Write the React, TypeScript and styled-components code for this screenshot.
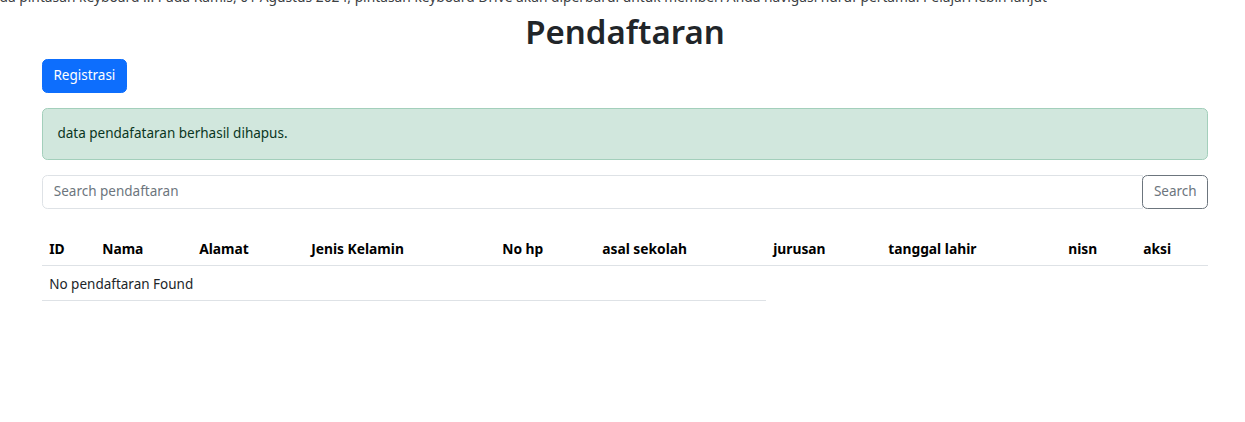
import styled, { createGlobalStyle } from "styled-components";

const GlobalStyle = createGlobalStyle`
  html, body {
    margin: 0;
    padding: 0;
    background: #fff;
  }
  body {
    font-family: "Noto Sans", "Open Sans", sans-serif;
    font-size: 13.5px;
    line-height: 21.6px;
    color: #212529;
    overflow: hidden;
  }
`;

const Notice = styled.div`
  display: flex;
  justify-content: flex-end;
  width: 1047px;
  margin-top: -14px;
  white-space: nowrap;
  overflow: hidden;
  font-size: 13.8px;
  line-height: 21.6px;
  color: #3c4043;
`;

const Container = styled.main`
  width: 1166px;
  margin-left: 42px;
`;

const Title = styled.h1`
  margin: 2px 0 6px;
  text-align: center;
  font-size: 33px;
  font-weight: 600;
  line-height: 43px;
  color: #212529;
`;

const Toolbar = styled.div`
  margin-bottom: 15px;
`;

const Button = styled.button<{ $variant?: "primary" | "outline" }>`
  font-family: inherit;
  font-size: 13.5px;
  line-height: 21.6px;
  padding: 5.2px 10.4px;
  border-radius: 5.4px;
  cursor: pointer;
  border: 1px solid ${(p) => (p.$variant === "outline" ? "#6c757d" : "#0d6efd")};
  background: ${(p) => (p.$variant === "outline" ? "transparent" : "#0d6efd")};
  color: ${(p) => (p.$variant === "outline" ? "#6c757d" : "#fff")};
`;

const Alert = styled.div`
  padding: 14.4px;
  margin-bottom: 15px;
  border: 1px solid #a3cfbb;
  border-radius: 5.4px;
  background: #d1e7dd;
  color: #0a3622;
`;

const SearchGroup = styled.form`
  display: flex;
  margin-bottom: 20px;

  ${Button} {
    border-top-left-radius: 5.4px;
    border-bottom-left-radius: 5.4px;
    margin-left: -1px;
  }
`;

const SearchInput = styled.input`
  flex: 1;
  font-family: inherit;
  font-size: 13.5px;
  line-height: 21.6px;
  padding: 5px 10.8px;
  border: 1px solid #dee2e6;
  border-radius: 5.4px 0 0 5.4px;
  color: #212529;
  outline: none;

  &::placeholder {
    color: #6c757d;
  }
`;

const Table = styled.table`
  width: 100%;
  table-layout: fixed;
  border-collapse: collapse;
`;

const Th = styled.th`
  text-align: left;
  vertical-align: bottom;
  padding: 9px 7.2px 5px;
  font-size: 13.8px;
  font-weight: 700;
  color: #000;
  border-bottom: 1px solid #dee2e6;
  white-space: nowrap;
`;

const Td = styled.td`
  padding: 8px 7.2px 5px;
  color: #212529;
  border-bottom: 1px solid #dee2e6;
`;

const columns: [string, number][] = [
  ["ID", 53],
  ["Nama", 97],
  ["Alamat", 112],
  ["Jenis Kelamin", 191],
  ["No hp", 100],
  ["asal sekolah", 171],
  ["jurusan", 115],
  ["tanggal lahir", 180],
  ["nisn", 75],
  ["aksi", 72],
];

export default function App() {
  return (
    <>
      <GlobalStyle />
      <Notice>
        Pembaruan pada pintasan keyboard ... Pada Kamis, 01 Agustus 2024, pintasan keyboard Drive akan
        diperbarui untuk memberi Anda navigasi huruf pertama. Pelajari lebih lanjut
      </Notice>
      <Container>
        <Title>Pendaftaran</Title>
        <Toolbar>
          <Button type="button">Registrasi</Button>
        </Toolbar>
        <Alert>data pendafataran berhasil dihapus.</Alert>
        <SearchGroup onSubmit={(e) => e.preventDefault()}>
          <SearchInput type="text" placeholder="Search pendaftaran" />
          <Button type="submit" $variant="outline">
            Search
          </Button>
        </SearchGroup>
        <Table>
          <colgroup>
            {columns.map(([name, w]) => (
              <col key={name} style={{ width: w }} />
            ))}
          </colgroup>
          <thead>
            <tr>
              {columns.map(([name]) => (
                <Th key={name}>{name}</Th>
              ))}
            </tr>
          </thead>
          <tbody>
            <tr>
              <Td colSpan={6}>No pendaftaran Found</Td>
            </tr>
          </tbody>
        </Table>
      </Container>
    </>
  );
}
